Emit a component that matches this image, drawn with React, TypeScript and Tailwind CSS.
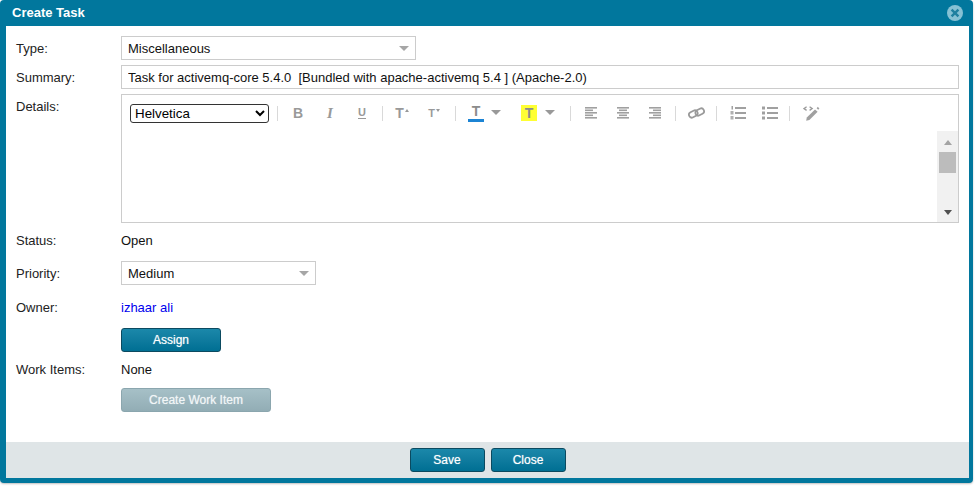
import React from 'react';

const font = "font-['Liberation_Sans',Arial,sans-serif]";

const Caret = ({ className = 'border-t-[#999]' }: { className?: string }) => (
  <span className={`h-0 w-0 border-x-[5px] border-t-[5px] border-x-transparent ${className}`} />
);

const Separator = ({ className = '' }: { className?: string }) => (
  <span className={`h-[15px] w-px bg-[#d9d9d9] ${className}`} />
);

const Cell: React.FC<{ children: React.ReactNode; className?: string }> = ({ children, className = 'w-[32px]' }) => (
  <button type="button" className={`flex h-[20px] items-center justify-center text-[#999] ${className}`}>
    {children}
  </button>
);

const AlignIcon = ({ kind }: { kind: 'left' | 'center' | 'right' }) => {
  const widths = [12, 8, 12, 8, 12];
  return (
    <svg width="12" height="12" viewBox="0 0 12 12" fill="#a0a0a0">
      {widths.map((w, i) => (
        <rect
          key={i}
          x={kind === 'left' ? 0 : kind === 'center' ? (12 - w) / 2 : 12 - w}
          y={i * 2.5}
          width={w}
          height={1.6}
        />
      ))}
    </svg>
  );
};

const LinkIcon = () => (
  <svg width="17" height="14" viewBox="0 0 17 14" fill="none" stroke="#9a9a9a" strokeWidth="1.8">
    <rect x="0.8" y="5.2" width="9" height="5.6" rx="2.8" transform="rotate(-28 5.3 8)" />
    <rect x="7.2" y="3.2" width="9" height="5.6" rx="2.8" transform="rotate(-28 11.7 6)" />
  </svg>
);

const OrderedIcon = () => (
  <svg width="16" height="14" viewBox="0 0 16 14" fill="#a0a0a0">
    <rect x="1.5" y="0" width="1.5" height="3.5" />
    <rect x="0.5" y="5" width="3" height="3.5" fill="#b0b0b0" />
    <rect x="0.5" y="10" width="3" height="3.5" fill="#b0b0b0" />
    <rect x="5" y="1" width="11" height="2" />
    <rect x="5" y="6" width="11" height="2" />
    <rect x="5" y="11" width="11" height="2" />
  </svg>
);

const BulletIcon = () => (
  <svg width="16" height="14" viewBox="0 0 16 14" fill="#a0a0a0">
    <rect x="0" y="0.5" width="3" height="3" />
    <rect x="0" y="5.5" width="3" height="3" />
    <rect x="0" y="10.5" width="3" height="3" />
    <rect x="5" y="1" width="11" height="2" />
    <rect x="5" y="6" width="11" height="2" />
    <rect x="5" y="11" width="11" height="2" />
  </svg>
);

const MagicIcon = () => (
  <svg width="17" height="15" viewBox="0 0 17 15" fill="none">
    <path d="M3.6 0.8 L1 2.6 L3.6 4.4 M6.6 0.8 L9.2 2.6 L6.6 4.4" stroke="#9a9a9a" strokeWidth="1.3" />
    <path d="M12 3.6 L14.6 5.8 L6.4 14 L3.2 14.8 L3.8 11.6 Z" fill="#a0a0a0" />
    <path d="M14.8 0.8 L16.4 2.4 L15.2 3.8 L13.6 2.2 Z" fill="#a0a0a0" />
  </svg>
);

const Toolbar = () => (
  <div className="flex h-[36px] items-center pl-[8px]">
    <select
      defaultValue="Helvetica"
      className="h-[19px] w-[139px] rounded-[3px] border border-[#333] bg-white pl-0 text-[13.33px] leading-none text-black"
    >
      <option>Helvetica</option>
      <option>Arial</option>
    </select>
    <Separator className="ml-[8px]" />
    <Cell className="ml-[4px] w-[32px]">
      <span className="text-[14px] font-bold leading-none">B</span>
    </Cell>
    <Cell>
      <span className="font-['Liberation_Serif',serif] text-[15px] font-bold italic leading-none">I</span>
    </Cell>
    <Cell>
      <span className="border-b-[1.5px] border-[#999] text-[11px] font-bold leading-[11px]">U</span>
    </Cell>
    <Separator className="ml-[4px]" />
    <Cell className="ml-[3px] w-[32px]">
      <span className="text-[14px] font-bold leading-none">T</span>
      <span className="mb-[5px] ml-px h-0 w-0 border-x-[2.5px] border-b-[3px] border-x-transparent border-b-[#999]" />
    </Cell>
    <Cell>
      <span className="text-[11px] font-bold leading-none">T</span>
      <span className="mb-[5px] ml-px h-0 w-0 border-x-[2.5px] border-t-[3px] border-x-transparent border-t-[#999]" />
    </Cell>
    <Separator className="ml-[5px]" />
    <Cell className="ml-[12px] w-[36px] justify-start">
      <span className="flex flex-col items-center">
        <span className="text-[14px] font-bold leading-[14px] text-[#8c8c8c]">T</span>
        <span className="mt-px h-[3px] w-[16px] bg-[#1c84d4]" />
      </span>
      <span className="ml-[7px] mt-[-1px] flex">
        <Caret />
      </span>
    </Cell>
    <Cell className="ml-[17px] w-[36px] justify-start">
      <span className="flex h-[16px] w-[16px] items-center justify-center bg-[#ffff33] text-[14px] font-bold leading-none text-[#8c8c8c]">
        T
      </span>
      <span className="ml-[8px] mt-[-1px] flex">
        <Caret />
      </span>
    </Cell>
    <Separator className="ml-[13px]" />
    <Cell className="ml-[4px] w-[32px]">
      <AlignIcon kind="left" />
    </Cell>
    <Cell>
      <AlignIcon kind="center" />
    </Cell>
    <Cell>
      <AlignIcon kind="right" />
    </Cell>
    <Separator className="ml-[4px]" />
    <Cell className="ml-[4px] w-[32px]">
      <LinkIcon />
    </Cell>
    <Separator className="ml-[4px]" />
    <Cell className="ml-[5px] w-[32px]">
      <OrderedIcon />
    </Cell>
    <Cell>
      <BulletIcon />
    </Cell>
    <Separator className="ml-[3px]" />
    <Cell className="ml-[5px] w-[32px]">
      <MagicIcon />
    </Cell>
  </div>
);

const Scrollbar = () => (
  <div className="flex w-[21px] flex-col items-center bg-[#f1f1f1]">
    <span className="mt-[9px] h-0 w-0 border-x-[4.5px] border-b-[5px] border-x-transparent border-b-[#a3a3a3]" />
    <span className="mt-[7px] h-[21px] w-[17px] bg-[#bcbcbc]" />
    <span className="mt-auto mb-[7px] h-0 w-0 border-x-[4.5px] border-t-[5px] border-x-transparent border-t-[#505050]" />
  </div>
);

const FakeSelect = ({ label, className }: { label: string; className: string }) => (
  <div className={`flex h-[24px] items-center justify-between border border-[#cccccc] bg-white px-[6px] ${className}`}>
    <span className="pt-[2px]">{label}</span>
    <Caret className="border-t-[#a6a6a6]" />
  </div>
);

const Row: React.FC<{ label: string; className?: string; labelClass?: string; children?: React.ReactNode }> = ({
  label,
  className = '',
  labelClass = 'self-center pt-[2px]',
  children,
}) => (
  <div className={`flex ${className}`}>
    <label className={`w-[105px] shrink-0 text-[#222] ${labelClass}`}>{label}</label>
    {children}
  </div>
);

const ActionButton: React.FC<{ children: React.ReactNode; className?: string; disabled?: boolean }> = ({
  children,
  className = '',
  disabled = false,
}) => (
  <button
    type="button"
    disabled={disabled}
    className={`h-[24px] rounded-[3px] border text-[12px] font-normal [text-shadow:0_0_1px_rgba(255,255,255,0.6)] ${
      disabled
        ? 'border-[#8ba6ae] bg-gradient-to-b from-[#a6c0c7] to-[#92adb5] text-[#f2f6f7]'
        : 'border-[#0b4a60] bg-gradient-to-b from-[#1b88aa] to-[#006f93] text-white'
    } ${className}`}
  >
    {children}
  </button>
);

export default function App() {
  return (
    <div className={`h-[486px] w-[976px] bg-white text-[13px] text-[#111] ${font}`}>
      <div className="flex h-[483px] w-[973px] flex-col rounded-[4px] bg-[#01779d] pb-[5px] pl-[6px] pr-[4px] shadow-[0_1px_2px_rgba(0,0,0,0.25)]">
        <div className="flex h-[26px] shrink-0 items-center justify-between px-[6px]">
          <span className="text-[13px] font-bold text-white">Create Task</span>
          <svg width="16" height="16" viewBox="0 0 16 16">
            <circle cx="8" cy="8" r="8" fill="#86c1d4" />
            <path d="M4.6 4.6 L11.4 11.4 M11.4 4.6 L4.6 11.4" stroke="#1f7f9f" strokeWidth="2.4" />
          </svg>
        </div>
        <div className="flex min-h-0 flex-1 flex-col bg-white">
          <div className="flex-1 px-[10px] pt-[10px]">
            <Row label="Type:">
              <FakeSelect label="Miscellaneous" className="w-[295px]" />
            </Row>
            <Row label="Summary:" className="mt-[5px]">
              <input
                readOnly
                value="Task for activemq-core 5.4.0  [Bundled with apache-activemq 5.4 ] (Apache-2.0)"
                className="h-[24px] min-w-0 flex-1 border border-[#cccccc] pl-[6px] pt-[1px] text-[#111] outline-none"
              />
            </Row>
            <Row label="Details:" className="mt-[5px]" labelClass="self-start pt-[3px]">
              <div className="flex h-[129px] min-w-0 flex-1 flex-col border border-[#cccccc]">
                <Toolbar />
                <div className="flex min-h-0 flex-1 justify-end">
                  <Scrollbar />
                </div>
              </div>
            </Row>
            <Row label="Status:" className="mt-[7px] h-[20px]">
              <span className="self-center pt-[2px]">Open</span>
            </Row>
            <Row label="Priority:" className="mt-[11px]">
              <FakeSelect label="Medium" className="w-[195px]" />
            </Row>
            <Row label="Owner:" className="mt-[12px] h-[20px]">
              <a href="#owner" className="self-center pt-[2px] text-[#0000ee]">
                izhaar ali
              </a>
            </Row>
            <div className="mt-[11px] pl-[105px]">
              <ActionButton className="block w-[100px]">Assign</ActionButton>
            </div>
            <Row label="Work Items:" className="mt-[7px] h-[20px]">
              <span className="self-center pt-[2px]">None</span>
            </Row>
            <div className="mt-[9px] pl-[105px]">
              <ActionButton disabled className="block w-[150px]">
                Create Work Item
              </ActionButton>
            </div>
          </div>
          <div className="flex h-[36px] shrink-0 items-center justify-center gap-[6px] bg-[#dfe5e7]">
            <ActionButton className="w-[75px]">Save</ActionButton>
            <ActionButton className="w-[75px]">Close</ActionButton>
          </div>
        </div>
      </div>
    </div>
  );
}
